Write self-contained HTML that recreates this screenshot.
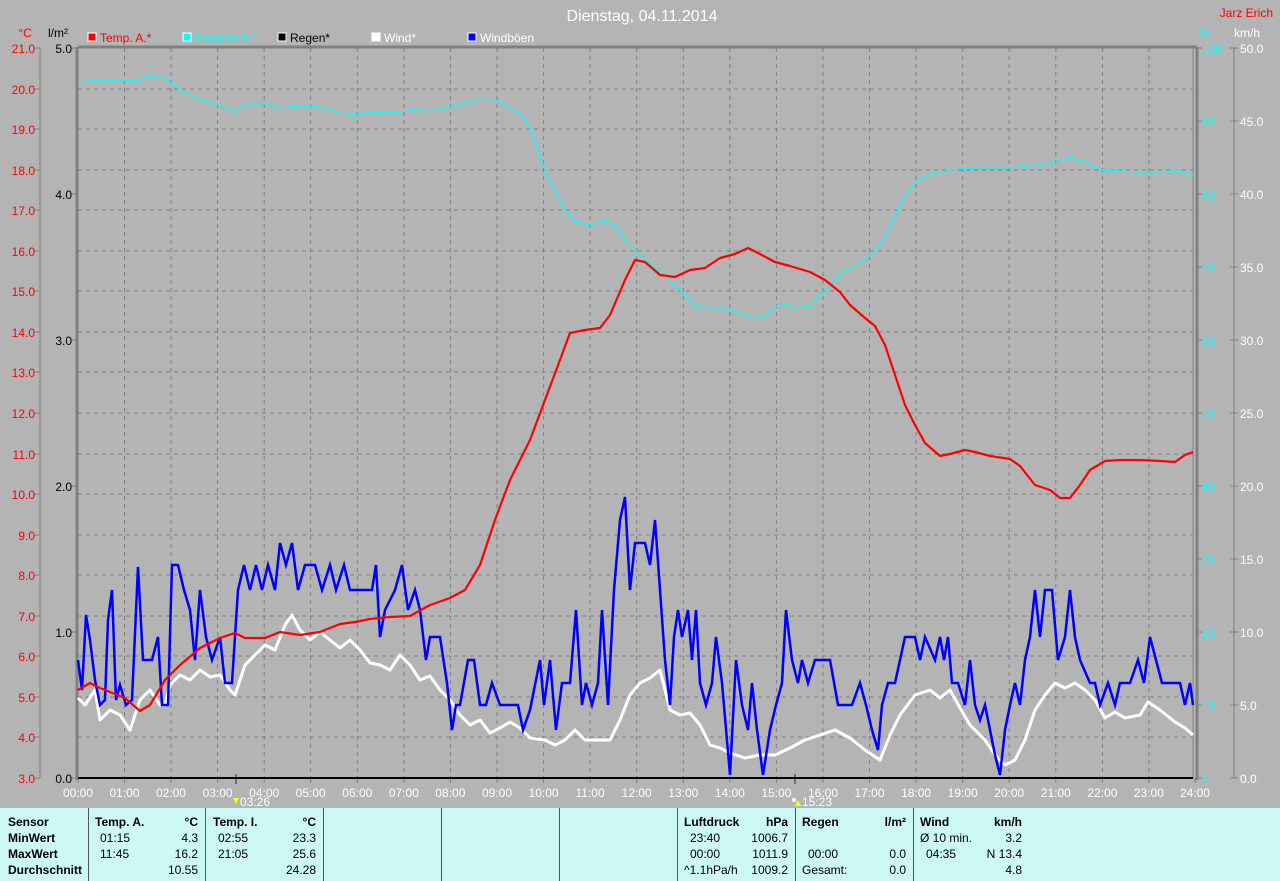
<!DOCTYPE html>
<html><head><meta charset="utf-8"><style>
html,body{margin:0;padding:0;background:#b4b4b4;}
body{width:1280px;height:881px;overflow:hidden;position:relative;font-family:"Liberation Sans",sans-serif;}
svg{position:absolute;left:0;top:0}
.tab{position:absolute;left:0;top:808px;width:1280px;height:73px;background:#ccf8f6;}
.tab div{position:absolute;font-size:12px;color:#000;white-space:nowrap}
.b{font-weight:bold}
.v{position:absolute;top:0;width:1px;height:73px;background:#555}
</style></head><body>
<svg width="1280" height="808" viewBox="0 0 1280 808" font-family="Liberation Sans, sans-serif">
<text x="642" y="21" fill="#fff" font-size="16" text-anchor="middle">Dienstag, 04.11.2014</text>
<text x="1273" y="17" fill="#f00" font-size="12" text-anchor="end">Jarz Erich</text>
<text x="25" y="37" fill="#f00" font-size="12" text-anchor="middle">°C</text>
<text x="58" y="37" fill="#000" font-size="12" text-anchor="middle">l/m²</text>
<text x="1205" y="37" fill="#0ff" font-size="12" text-anchor="middle">%</text>
<text x="1247" y="37" fill="#fff" font-size="12" text-anchor="middle">km/h</text>
<g font-size="12">
<rect x="88" y="33" width="8" height="8" fill="#f00" stroke="#fff"/><text x="100" y="42" fill="#f00">Temp. A.*</text>
<rect x="183" y="33" width="8" height="8" fill="#0ff" stroke="#fff"/><text x="195" y="42" fill="#0ff">Feuchte A.*</text>
<rect x="278" y="33" width="8" height="8" fill="#000" stroke="#fff"/><text x="290" y="42" fill="#000">Regen*</text>
<rect x="372" y="33" width="8" height="8" fill="#fff" stroke="#fff"/><text x="384" y="42" fill="#fff">Wind*</text>
<rect x="468" y="33" width="8" height="8" fill="#00f" stroke="#fff"/><text x="480" y="42" fill="#fff">Windböen</text>
</g>
<g stroke="#808080" stroke-dasharray="4,4" stroke-width="1">
<path d="M78 89H1193M78 129H1193M78 170H1193M78 210H1193M78 251H1193M78 291H1193M78 332H1193M78 372H1193M78 413H1193M78 454H1193M78 494H1193M78 535H1193M78 575H1193M78 616H1193M78 656H1193M78 697H1193M78 737H1193"/>
<path d="M124.5 48V778M171 48V778M217.6 48V778M264.2 48V778M310.7 48V778M357.3 48V778M403.9 48V778M450.4 48V778M497 48V778M543.6 48V778M590.1 48V778M636.7 48V778M683.3 48V778M729.8 48V778M776.4 48V778M823 48V778M869.5 48V778M916.1 48V778M962.7 48V778M1009.2 48V778M1055.8 48V778M1102.4 48V778M1148.9 48V778"/>
</g>
<g stroke="#808080" stroke-width="1" fill="none">
<path d="M40 48V778M1234 48V778M1193 48V778"/>
<path d="M34 48h6M34 89h6M34 129h6M34 170h6M34 210h6M34 251h6M34 291h6M34 332h6M34 372h6M34 413h6M34 454h6M34 494h6M34 535h6M34 575h6M34 616h6M34 656h6M34 697h6M34 737h6M34 778h6"/>
<path d="M72 48h5M72 194h5M72 340h5M72 486h5M72 632h5M72 778h5"/>
<path d="M1197 48h5M1197 121h5M1197 194h5M1197 267h5M1197 340h5M1197 413h5M1197 486h5M1197 559h5M1197 632h5M1197 705h5M1197 778h5"/>
<path d="M1230 48h8M1230 121h8M1230 194h8M1230 267h8M1230 340h8M1230 413h8M1230 486h8M1230 559h8M1230 632h8M1230 705h8M1230 778h8"/>
<path d="M78 778v5M124.5 778v5M171 778v5M217.6 778v5M264.2 778v5M310.7 778v5M357.3 778v5M403.9 778v5M450.4 778v5M497 778v5M543.6 778v5M590.1 778v5M636.7 778v5M683.3 778v5M729.8 778v5M776.4 778v5M823 778v5M869.5 778v5M916.1 778v5M962.7 778v5M1009.2 778v5M1055.8 778v5M1102.4 778v5M1148.9 778v5M1195 778v5"/>
</g>
<path d="M77 47V780M78 47H1197M1197 47V780" stroke="#808080" stroke-width="3" fill="none"/>
<path d="M236 774v10M795 774v10" stroke="#707070" stroke-width="2"/>
<g font-size="12" fill="#f00" text-anchor="end">
<text x="35" y="53">21.0</text><text x="35" y="94">20.0</text><text x="35" y="134">19.0</text><text x="35" y="175">18.0</text><text x="35" y="215">17.0</text><text x="35" y="256">16.0</text><text x="35" y="296">15.0</text><text x="35" y="337">14.0</text><text x="35" y="377">13.0</text><text x="35" y="418">12.0</text><text x="35" y="459">11.0</text><text x="35" y="499">10.0</text><text x="35" y="540">9.0</text><text x="35" y="580">8.0</text><text x="35" y="621">7.0</text><text x="35" y="661">6.0</text><text x="35" y="702">5.0</text><text x="35" y="742">4.0</text><text x="35" y="783">3.0</text>
</g>
<g font-size="12" fill="#000" text-anchor="end">
<text x="72" y="53">5.0</text><text x="72" y="199">4.0</text><text x="72" y="345">3.0</text><text x="72" y="491">2.0</text><text x="72" y="637">1.0</text><text x="72" y="783">0.0</text>
</g>
<g font-size="12" fill="#0ff">
<text x="1202" y="53">100</text><text x="1202" y="126">90</text><text x="1202" y="199">80</text><text x="1202" y="272">70</text><text x="1202" y="345">60</text><text x="1202" y="418">50</text><text x="1202" y="491">40</text><text x="1202" y="564">30</text><text x="1202" y="637">20</text><text x="1202" y="710">10</text><text x="1202" y="783">0</text>
</g>
<g font-size="12" fill="#fff">
<text x="1240" y="53">50.0</text><text x="1240" y="126">45.0</text><text x="1240" y="199">40.0</text><text x="1240" y="272">35.0</text><text x="1240" y="345">30.0</text><text x="1240" y="418">25.0</text><text x="1240" y="491">20.0</text><text x="1240" y="564">15.0</text><text x="1240" y="637">10.0</text><text x="1240" y="710">5.0</text><text x="1240" y="783">0.0</text>
</g>
<g font-size="12" fill="#fff" text-anchor="middle">
<text x="78" y="797">00:00</text><text x="124.5" y="797">01:00</text><text x="171" y="797">02:00</text><text x="217.6" y="797">03:00</text><text x="264.2" y="797">04:00</text><text x="310.7" y="797">05:00</text><text x="357.3" y="797">06:00</text><text x="403.9" y="797">07:00</text><text x="450.4" y="797">08:00</text><text x="497" y="797">09:00</text><text x="543.6" y="797">10:00</text><text x="590.1" y="797">11:00</text><text x="636.7" y="797">12:00</text><text x="683.3" y="797">13:00</text><text x="729.8" y="797">14:00</text><text x="776.4" y="797">15:00</text><text x="823" y="797">16:00</text><text x="869.5" y="797">17:00</text><text x="916.1" y="797">18:00</text><text x="962.7" y="797">19:00</text><text x="1009.2" y="797">20:00</text><text x="1055.8" y="797">21:00</text><text x="1102.4" y="797">22:00</text><text x="1148.9" y="797">23:00</text><text x="1195" y="797">24:00</text>
</g>
<path d="M233 798l3 6 3-6z" fill="#ff0"/><text x="240" y="806" font-size="12" fill="#fff">03:26</text>
<path d="M795 806l3-6 3 6z" fill="#ff0"/><circle cx="794" cy="800" r="2" fill="#fff"/><text x="802" y="806" font-size="12" fill="#fff">15:23</text>
<path d="M78 778H1193" stroke="#000" stroke-width="2"/>
<polyline fill="none" stroke="#0ff" stroke-width="1.3" points="78,82 100,80 120,81 140,80 150,76 165,78 180,90 200,100 220,105 235,112 245,104 265,104 280,108 300,106 320,107 340,113 355,115 370,112 390,113 420,110 440,109 460,105 480,99 495,100 510,108 525,118 535,140 545,170 555,190 565,210 575,222 590,225 605,220 615,225 625,240 640,255 655,268 670,280 680,290 695,306 710,308 725,308 740,313 755,318 765,316 780,303 795,308 810,306 825,290 840,275 855,265 870,256 880,245 890,228 900,205 910,188 920,178 935,173 950,170 970,168 990,168 1010,168 1030,166 1050,163 1070,158 1085,162 1100,170 1120,171 1140,172 1160,172 1175,170 1193,176"/>
<polyline fill="none" stroke="#fff" stroke-width="3" stroke-linejoin="round" points="78,698 85,705 95,690 100,720 110,710 120,715 130,730 140,700 150,690 160,705 165,705 170,685 180,675 190,680 200,670 210,677 220,675 230,690 235,695 245,665 255,655 265,645 275,650 285,625 292,615 300,630 310,640 320,632 330,640 340,648 350,640 360,650 370,663 380,665 390,670 400,655 410,665 420,680 430,676 440,690 450,700 460,715 470,725 480,720 490,733 500,728 510,722 520,728 530,738 545,740 555,745 565,740 575,730 585,740 595,740 610,740 620,720 630,695 640,683 650,678 660,670 670,710 680,715 690,713 700,725 710,745 720,748 730,753 745,758 760,755 775,755 790,748 805,740 820,735 835,730 850,738 865,750 880,760 890,735 900,715 915,695 930,690 940,698 950,690 960,708 970,725 985,740 995,755 1005,765 1015,760 1025,740 1035,710 1045,695 1055,683 1065,688 1075,683 1085,690 1095,700 1105,718 1115,712 1125,718 1140,715 1148,702 1160,710 1175,722 1185,728 1193,735"/>
<polyline fill="none" stroke="#00f" stroke-width="2.5" points="78,660 82,690 86,615 90,640 95,680 100,705 105,700 108,620 112,590 116,700 120,685 126,705 132,700 138,567 143,660 152,660 158,637 162,705 168,705 172,565 178,565 184,590 190,610 195,660 200,590 206,637 212,660 220,637 225,683 232,683 238,590 244,565 250,590 256,565 262,590 268,565 275,590 280,543 286,565 292,543 298,590 305,565 315,565 322,590 330,565 336,590 344,565 350,590 360,590 372,590 376,565 380,637 385,610 395,590 402,565 408,610 415,590 420,610 426,660 430,637 440,637 447,683 452,730 456,705 460,705 468,660 474,660 480,705 486,705 492,683 500,705 510,705 518,705 523,730 530,710 540,660 544,705 550,660 556,730 562,683 570,683 576,610 582,705 586,683 592,705 598,683 602,610 608,705 614,590 620,520 625,497 630,590 635,543 645,543 650,565 655,520 660,590 665,660 670,705 674,637 678,610 682,637 688,610 692,660 696,610 700,683 706,705 712,683 716,637 722,683 730,775 736,660 742,705 748,730 752,683 757,730 763,775 770,730 776,705 782,683 786,610 792,660 798,683 802,660 808,683 815,660 830,660 838,705 852,705 860,683 866,705 872,730 878,750 882,705 888,683 895,683 900,660 905,637 915,637 920,660 925,637 935,660 940,637 944,660 948,637 952,683 958,683 965,705 970,660 975,705 980,720 985,705 990,730 995,755 1000,775 1005,730 1010,705 1015,683 1020,705 1025,660 1030,637 1035,590 1040,637 1045,590 1052,590 1058,660 1065,637 1070,590 1075,637 1080,660 1090,683 1095,683 1100,705 1108,683 1115,705 1120,683 1130,683 1138,660 1144,683 1150,637 1156,660 1162,683 1170,683 1180,683 1185,705 1190,683 1193,705"/>
<polyline fill="none" stroke="#f00" stroke-width="2.2" stroke-linejoin="round" points="78,690 90,683 100,688 110,692 125,698 140,711 150,705 165,680 180,665 200,648 220,638 235,633 245,638 265,638 280,632 300,635 320,632 340,624 355,622 370,619 390,617 410,616 430,605 450,598 465,590 480,565 495,520 510,480 530,440 545,400 560,360 570,333 585,330 600,328 610,315 625,280 635,260 645,262 660,275 675,277 690,270 705,268 720,258 735,254 748,248 760,254 775,262 790,266 810,272 825,280 840,292 850,305 865,318 875,326 885,345 895,375 905,405 915,425 925,443 940,456 950,454 965,450 975,452 990,456 1010,459 1020,466 1035,485 1050,490 1060,498 1070,498 1080,485 1090,470 1105,461 1120,460 1140,460 1160,461 1175,462 1185,455 1193,452"/>
</svg>
<div class="tab">
<div class="v" style="left:88px"></div><div class="v" style="left:205px"></div><div class="v" style="left:323px"></div><div class="v" style="left:441px"></div><div class="v" style="left:559px"></div><div class="v" style="left:677px"></div><div class="v" style="left:795px"></div><div class="v" style="left:913px"></div>
<div class="b" style="left:8px;top:7px">Sensor</div>
<div class="b" style="left:8px;top:23px">MinWert</div>
<div class="b" style="left:8px;top:39px">MaxWert</div>
<div class="b" style="left:8px;top:55px">Durchschnitt</div>
<div class="b" style="left:95px;top:7px">Temp. A.</div><div class="b" style="right:1082px;top:7px">°C</div>
<div style="left:100px;top:23px">01:15</div><div style="right:1082px;top:23px">4.3</div>
<div style="left:100px;top:39px">11:45</div><div style="right:1082px;top:39px">16.2</div>
<div style="right:1082px;top:55px">10.55</div>
<div class="b" style="left:213px;top:7px">Temp. I.</div><div class="b" style="right:964px;top:7px">°C</div>
<div style="left:218px;top:23px">02:55</div><div style="right:964px;top:23px">23.3</div>
<div style="left:218px;top:39px">21:05</div><div style="right:964px;top:39px">25.6</div>
<div style="right:964px;top:55px">24.28</div>
<div class="b" style="left:684px;top:7px">Luftdruck</div><div class="b" style="right:492px;top:7px">hPa</div>
<div style="left:690px;top:23px">23:40</div><div style="right:492px;top:23px">1006.7</div>
<div style="left:690px;top:39px">00:00</div><div style="right:492px;top:39px">1011.9</div>
<div style="left:684px;top:55px">^1.1hPa/h</div><div style="right:492px;top:55px">1009.2</div>
<div class="b" style="left:802px;top:7px">Regen</div><div class="b" style="right:374px;top:7px">l/m²</div>
<div style="left:808px;top:39px">00:00</div><div style="right:374px;top:39px">0.0</div>
<div style="left:802px;top:55px">Gesamt:</div><div style="right:374px;top:55px">0.0</div>
<div class="b" style="left:920px;top:7px">Wind</div><div class="b" style="right:258px;top:7px">km/h</div>
<div style="left:920px;top:23px">Ø 10 min.</div><div style="right:258px;top:23px">3.2</div>
<div style="left:926px;top:39px">04:35</div><div style="right:258px;top:39px">N 13.4</div>
<div style="right:258px;top:55px">4.8</div>
</div>
</body></html>
